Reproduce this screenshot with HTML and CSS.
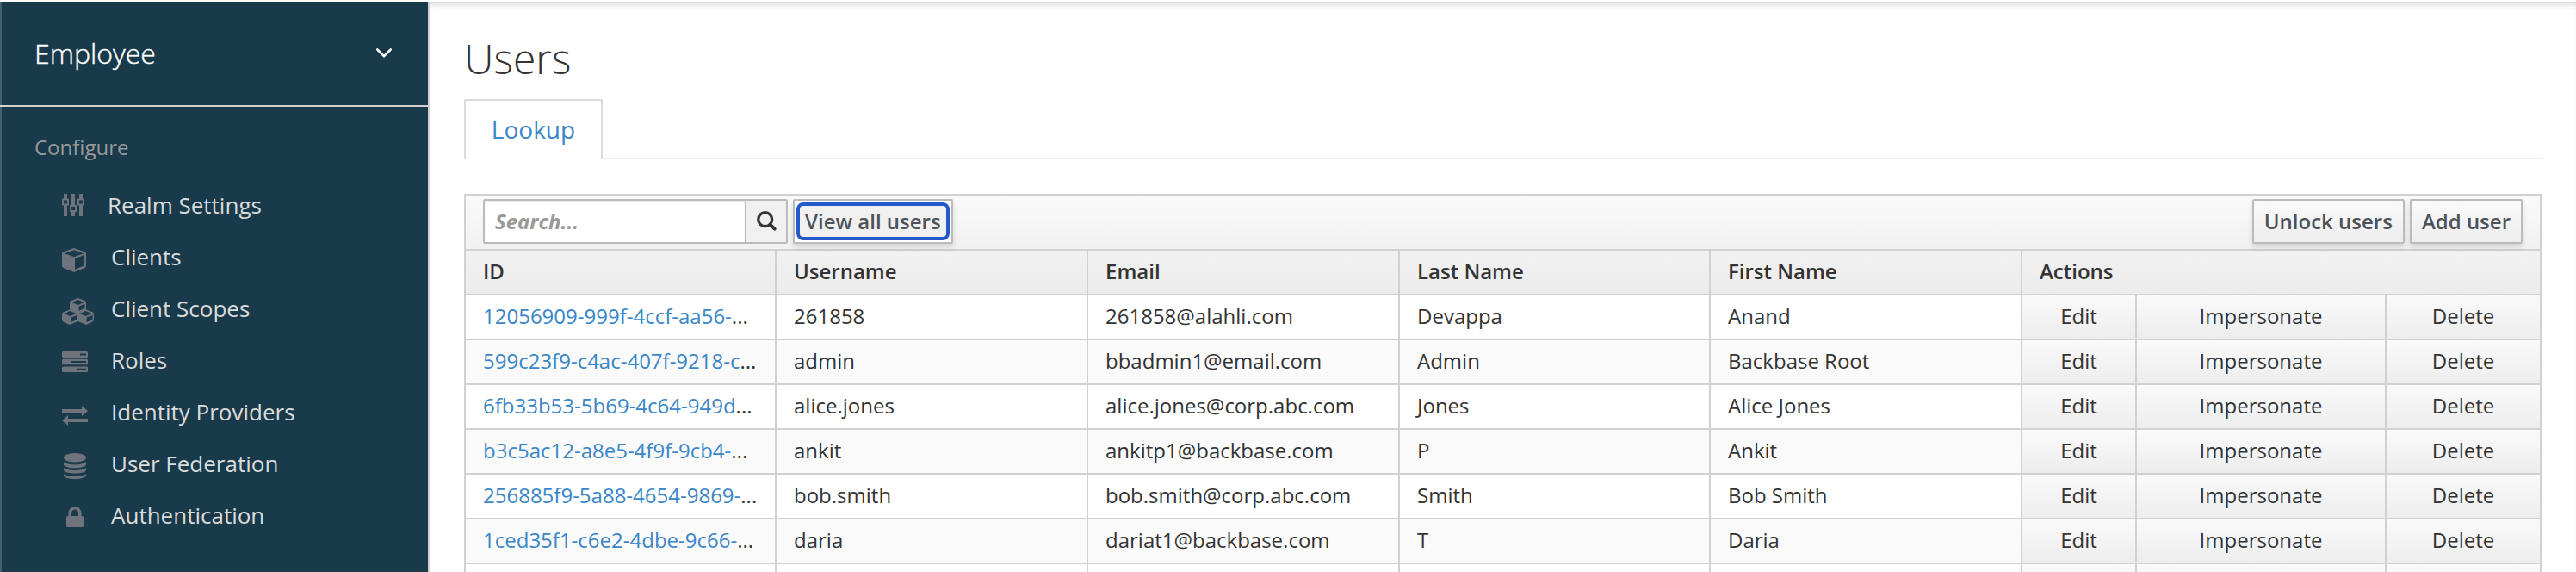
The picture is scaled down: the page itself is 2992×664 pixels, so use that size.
FILE: index.html
```
<!DOCTYPE html>
<html lang="en">
<head>
<meta charset="utf-8">
<title>Users</title>
<link rel="stylesheet" href="styles.css">
</head>
<body>
<div class="app">
  <aside class="sidebar">
    <div class="realm"><span>Employee</span>
      <svg class="chev" width="18" height="11" viewBox="0 0 18 11"><path d="M1.300 1.500 9 9.200l7.700-7.700" fill="none" stroke="#fff" stroke-width="2.600" stroke-linecap="round"/></svg>
    </div>
    <h2 class="section">Configure</h2>
    <nav class="menu">
      <a class="item first"><span class="icon"><svg width="26" height="26" viewBox="0 0 26 26"><path d="M2 0h4v6h-4zM2 13h4v13h-4zM11 0h4v13h-4zM11 21h4v5h-4zM20 0h4v6h-4zM20 13h4v13h-4z"/><path class="line" d="M1 6.500h6v6h-6zM10 14h6v6h-6zM19 6.500h6v6h-6z"/></svg></span>Realm Settings</a>
      <a class="item"><span class="icon cube"><svg width="28" height="28" viewBox="0 0 28 28"><path fill-rule="evenodd" d="M14 0 27 4.500 28 6v15l-1 1.700L14 28 1 22.700 0 21V6l1-1.500zM3 6.200l11 4 11-4-11-4zM15 12v12.800l11-4.600V8z"/></svg></span>Clients</a>
      <a class="item"><span class="icon cubes"><svg width="37" height="31" viewBox="0 0 37 31"><path fill-rule="evenodd" d="M18.500 0 27 3.300 28 5v8.500l8 3 1 1.700v7.300l-1 1.700L28 31l-9.500-4L9 31l-8-3.800-1-1.700v-7.300l1-1.700 8-3V5l1-1.700zM11.500 5l7 3 7-3-7-3zM19.500 9.700v5l7-3V7zM2.500 18l7 3 7-3-7-3zM10.500 22.700v5.300l7-3v-5zM20.500 18l7 3 7-3-7-3zM28.500 22.700v5.300l7-3v-5z"/></svg></span>Client Scopes</a>
      <a class="item"><span class="icon roles"><svg width="30" height="24" viewBox="0 0 30 24"><path fill-rule="evenodd" d="M1 0h28l1 1v5l-1 1H1L0 6V1zM21 2.500v2h7v-2zM1 8.700h28l1 1v4.500l-1 1H1l-1-1V9.700zM10.500 11v2H28v-2zM1 17.500h28l1 1V23l-1 1H1l-1-1v-4.500zM17 19.700v2h11v-2z"/></svg></span>Roles</a>
      <a class="item"><span class="icon swap"><svg width="30" height="23" viewBox="0 0 30 23"><path d="M0 4h23V0l7 6-7 6V8H0zM30 15H7v-4l-7 6 7 6v-4h23z"/></svg></span>Identity Providers</a>
      <a class="item"><span class="icon db"><svg width="26" height="30" viewBox="0 0 26 30"><ellipse cx="13" cy="5.300" rx="13" ry="5.300"/><path d="M0 10c4 4.500 22 4.500 26 0v3.500c-2 5-24 5-26 0zM0 17c4 4 22 4 26 0v3c-2 4.700-24 4.700-26 0zM0 24c4 4 22 4 26 0v2.500c-3 4.700-23 4.700-26 0z"/></svg></span>User Federation</a>
      <a class="item"><span class="icon lock"><svg width="20" height="24" viewBox="0 0 20 24"><rect y="11" width="20" height="13" rx="1.500"/><path d="M4.200 12V8a5.800 6.300 0 0 1 11.600 0v4" class="shackle"/></svg></span>Authentication</a>
    </nav>
  </aside>
  <main class="main">
    <h1 class="title">Users</h1>
    <div class="tabs"><a class="tab">Lookup</a></div>
    <section class="table">
      <div class="toolbar">
        <div class="search"><span class="input">Search...</span><span class="go"><svg width="23" height="23" viewBox="0 0 23 23"><circle cx="9.700" cy="9.700" r="8" fill="none" stroke="#333" stroke-width="3.300"/><path d="m15.500 15.500 5.200 5.200" stroke="#333" stroke-width="3.800" stroke-linecap="round"/></svg></span></div>
        <button class="btn focus">View all users</button>
        <span class="grow"></span>
        <button class="btn">Unlock users</button>
        <button class="btn">Add user</button>
      </div>
      <div class="row head"><span>ID</span><span>Username</span><span>Email</span><span>Last Name</span><span>First Name</span><span class="wide">Actions</span></div>
      <div class="row"><span class="id"><a>12056909-999f-4ccf-aa56-</a>...</span><span>261858</span><span>261858@alahli.com</span><span>Devappa</span><span>Anand</span><span class="act">Edit</span><span class="act">Impersonate</span><span class="act">Delete</span></div>
      <div class="row alt"><span class="id"><a>599c23f9-c4ac-407f-9218-c</a>...</span><span>admin</span><span>bbadmin1@email.com</span><span>Admin</span><span>Backbase Root</span><span class="act">Edit</span><span class="act">Impersonate</span><span class="act">Delete</span></div>
      <div class="row"><span class="id"><a>6fb33b53-5b69-4c64-949d</a>...</span><span>alice.jones</span><span>alice.jones@corp.abc.com</span><span>Jones</span><span>Alice Jones</span><span class="act">Edit</span><span class="act">Impersonate</span><span class="act">Delete</span></div>
      <div class="row alt"><span class="id"><a>b3c5ac12-a8e5-4f9f-9cb4-</a>...</span><span>ankit</span><span>ankitp1@backbase.com</span><span>P</span><span>Ankit</span><span class="act">Edit</span><span class="act">Impersonate</span><span class="act">Delete</span></div>
      <div class="row"><span class="id"><a>256885f9-5a88-4654-9869-</a>...</span><span>bob.smith</span><span>bob.smith@corp.abc.com</span><span>Smith</span><span>Bob Smith</span><span class="act">Edit</span><span class="act">Impersonate</span><span class="act">Delete</span></div>
      <div class="row alt"><span class="id"><a>1ced35f1-c6e2-4dbe-9c66-</a>...</span><span>daria</span><span>dariat1@backbase.com</span><span>T</span><span>Daria</span><span class="act">Edit</span><span class="act">Impersonate</span><span class="act">Delete</span></div>
      <div class="row"><span></span><span></span><span></span><span></span><span></span><span class="act"></span><span class="act"></span><span class="act"></span></div>
    </section>
  </main>
</div>
</body>
</html>
```
FILE: styles.css
```
* { box-sizing: border-box; }
body { margin: 0; background: #fff; font-family: "Open Sans", "Noto Sans", sans-serif; color: #333; font-size: 24px; }
.app { display: flex; height: 664px; padding-top: 2px; overflow: hidden; }

.sidebar { width: 499px; flex: none; background: #183a4a; border-left: 2px solid #456170; border-right: 2px solid #d1d1d1; }
.realm { height: 122px; border-bottom: 2px solid #d1d1d1; margin-left: -2px; display: flex; justify-content: space-between; align-items: center; padding: 0 42px 0 40px; color: #fff; font-size: 32px; line-height: 44px; font-weight: 300; -webkit-text-stroke: 0.4px #fff; }
.chev { margin-bottom: 2px; }
.section { margin: 0; padding: 30px 0 0 38px; font-size: 24px; line-height: 34px; font-weight: 400; color: #999; }
.menu { padding-top: 20px; }
.item { display: flex; align-items: center; height: 60px; color: #dbdbdb; font-size: 26px; }
.icon { width: 57px; margin-left: 70px; display: flex; }
.first .icon { width: 53px; }
.icon svg { fill: #6f737c; }
.line { fill: none; stroke: #6f737c; stroke-width: 2; }
.shackle { fill: none; stroke: #6f737c; stroke-width: 3.5; }
.cube, .swap { padding-top: 8px; }
.cubes { padding-top: 6px; }
.roles { padding-top: 4px; }
.db { padding: 6px 0 0 2px; }
.lock { padding: 4px 0 0 5px; }

.main { flex: 1; min-width: 0; padding: 0 40px; box-shadow: inset 0 8px 8px -6px #ccc; }
.title { margin: 0; padding-top: 33px; height: 113px; font-size: 48px; line-height: 66px; font-weight: 300; }
.tabs { display: flex; height: 70px; border-bottom: 2px solid #ececec; }
.tab { width: 161px; height: 70px; border: 2px solid #dcdcdc; border-bottom: 0; border-radius: 2px 2px 0 0; background: #fff; color: #3986c8; font-size: 28px; line-height: 66px; text-align: center; }

.table { margin-top: 40px; border: 2px solid #d1d1d1; border-bottom: 0; }
.toolbar { height: 62px; display: flex; align-items: flex-start; gap: 6px; padding: 4px 20px; background: linear-gradient(#fafafa, #f1f1f1); }
.search { display: flex; width: 354px; height: 52px; border: 2px solid #bbb; border-radius: 2px; }
.input { flex: 1; background: #fff; padding-left: 12px; line-height: 48px; font-style: italic; font-weight: 700; color: #999; box-shadow: inset 0 2px 2px #eee; }
.go { width: 48px; background: #f0f0f0; border-left: 2px solid #bbb; display: flex; align-items: center; justify-content: center; padding-bottom: 1px; }
.btn { height: 52px; padding: 0 12px 1px; border: 2px solid #bbb; border-radius: 2px; background: linear-gradient(#fafafa, #ededed); box-shadow: 0 4px 6px rgba(3,3,3,.12); font: 600 24px "Open Sans", sans-serif; color: #4d5258; }
.focus { position: relative; background: #f0f0f0; box-shadow: inset 0 0 0 3px #fff, 0 4px 6px rgba(3,3,3,.12); }
.focus::after { content: ""; position: absolute; inset: 2px; border: 4px solid #2459c9; border-radius: 8px; }
.grow { flex: 1; }

.row { display: grid; grid-template-columns: 361px 362px 362px 361px 362px 133px 290px 178px; height: 52px; border-top: 2px solid #d1d1d1; line-height: 48px; background: #fff; }
.row span { border-right: 2px solid #d1d1d1; padding-left: 20px; white-space: nowrap; overflow: hidden; }
.row span:last-child { border-right: 0; }
.alt { background: #fafafa; }
.head { background: linear-gradient(#f1f1f1, #ececec); font-weight: 600; }
.wide { grid-column: span 3; }
.row .act { text-align: center; padding: 0; background: linear-gradient(#fafafa, #ededed); }
.id a { color: #3986c8; }
```
